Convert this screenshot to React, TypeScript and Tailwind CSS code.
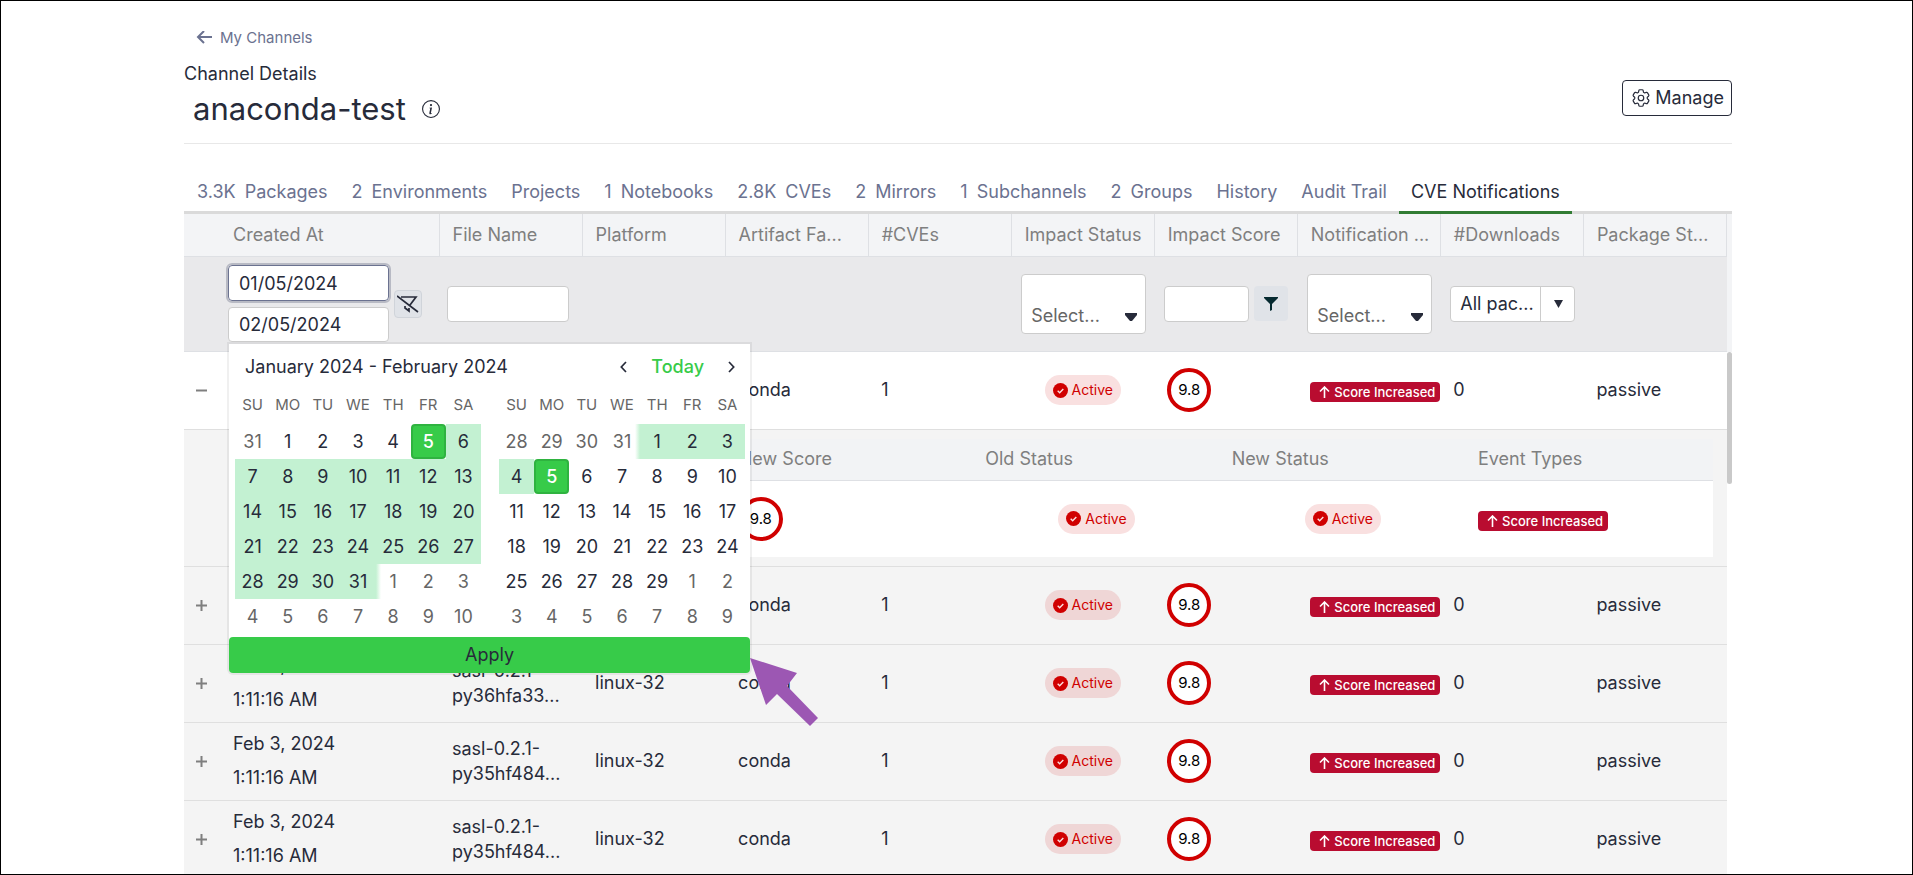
import React from "react";
import { BsInfoCircle } from "react-icons/bs";
import { HiOutlineCog6Tooth } from "react-icons/hi2";

interface Tab {
  count?: string;
  label: string;
}

interface Notification {
  id: number;
  date: string;
  time: string;
  fileName: string[];
  platform: string;
  family: string;
  cves: number;
  score: string;
  downloads: number;
  status: string;
}

interface MonthProps {
  name: string;
  days: number[];
  firstDay: number;
  lastDay: number;
  rangeStart: number;
  rangeEnd: number;
  selected: number;
}

const tabs: Tab[] = [
  { count: "3.3K", label: "Packages" },
  { count: "2", label: "Environments" },
  { label: "Projects" },
  { count: "1", label: "Notebooks" },
  { count: "2.8K", label: "CVEs" },
  { count: "2", label: "Mirrors" },
  { count: "1", label: "Subchannels" },
  { count: "2", label: "Groups" },
  { label: "History" },
  { label: "Audit Trail" },
  { label: "CVE Notifications" },
];

const columns = [
  "File Name",
  "Platform",
  "Artifact Fa...",
  "#CVEs",
  "Impact Status",
  "Impact Score",
  "Notification ...",
  "#Downloads",
  "Package St...",
];

const detailColumns = [
  "Event Date",
  "Old Score",
  "New Score",
  "Old Status",
  "New Status",
  "Event Types",
];

const weekDays = ["SU", "MO", "TU", "WE", "TH", "FR", "SA"];

const base = {
  date: "Feb 3, 2024",
  time: "1:11:16 AM",
  platform: "linux-32",
  family: "conda",
  cves: 1,
  score: "9.8",
  downloads: 0,
  status: "passive",
};

const notifications: Notification[] = [
  { id: 1, fileName: ["sasl-0.2.1-", "py36hfa33..."], ...base },
  { id: 2, fileName: ["sasl-0.2.1-", "py36hfa33..."], ...base },
  { id: 3, fileName: ["sasl-0.2.1-", "py36hfa33..."], ...base },
  { id: 4, fileName: ["sasl-0.2.1-", "py35hf484..."], ...base },
  { id: 5, fileName: ["sasl-0.2.1-", "py35hf484..."], ...base },
];

// Build the 42 numbers of a month page, with the neighbouring months' days
const monthPage = (prev: number[], length: number) => {
  const days = [...prev];
  for (let d = 1; d <= length; d++) days.push(d);
  for (let d = 1; days.length < 42; d++) days.push(d);
  return days;
};

function ActiveBadge() {
  return (
    <span className="inline-flex items-center gap-1 h-[30px] px-2 rounded-full bg-[#d00000]/12 text-[#d00000] text-sm align-middle">
      <svg width="15" height="15" viewBox="0 0 16 16" aria-hidden="true">
        <circle cx="8" cy="8" r="8" fill="#d00000" />
        <path
          d="M5 8.3 7.1 10.3 11 6.3"
          fill="none"
          stroke="#fbe0e0"
          strokeWidth="1.5"
        />
      </svg>
      Active
    </span>
  );
}

function ScoreCircle({ score }: { score: string }) {
  return (
    <span className="flex items-center justify-center w-11 h-11 rounded-full border-4 border-[#d00000] bg-white text-black text-[15px]">
      {score}
    </span>
  );
}

function ScoreIncreased() {
  return (
    <span className="relative top-0.5 inline-flex items-center gap-1 h-5 w-[130px] pl-[9px] rounded-sm bg-[#b90c30] text-white text-[13px] font-medium whitespace-nowrap">
      <svg
        className="shrink-0"
        width="11"
        height="12"
        viewBox="0 0 11 12"
        aria-hidden="true"
      >
        <path
          d="M5.5 12V1M1 5.5 5.5 1 10 5.5"
          fill="none"
          stroke="currentColor"
          strokeWidth="1.6"
        />
      </svg>
      Score Increased
    </span>
  );
}

function Caret({ small }: { small?: boolean }) {
  return (
    <svg
      width={small ? 9 : 12}
      height="8"
      viewBox="0 0 12 8"
      preserveAspectRatio="none"
      aria-hidden="true"
    >
      <path
        d={small ? "M0 0H12L6 8Z" : "M0 0H12V2L7 8H5L0 2Z"}
        fill="#272b3a"
      />
    </svg>
  );
}

function SelectFilter({ label }: { label: string }) {
  return (
    <div className="relative w-[125px] h-[60px] ml-0.5">
      <select
        aria-label={label}
        className="appearance-none w-full h-full pt-6 pl-[9px] bg-white border border-[#cccccc] rounded text-[#666666]"
      >
        <option>Select...</option>
      </select>
      <span className="absolute right-[9px] bottom-[13px] pointer-events-none">
        <Caret />
      </span>
    </div>
  );
}

function MonthCalendar(props: MonthProps) {
  const { name, days, firstDay, lastDay, rangeStart, rangeEnd, selected } =
    props;
  const weeks = [0, 1, 2, 3, 4, 5].map((w) => days.slice(w * 7, w * 7 + 7));

  return (
    <table
      aria-label={name}
      className="w-[246px] table-fixed text-center leading-6"
    >
      <thead>
        <tr className="h-[38px] text-[15px] text-[#666666]">
          {weekDays.map((day) => (
            <th key={day} className="font-normal p-0">
              {day}
            </th>
          ))}
        </tr>
      </thead>
      <tbody>
        {weeks.map((week, w) => (
          <tr key={w} className="h-[35px]">
            {week.map((day, d) => {
              const index = w * 7 + d;
              const inMonth = index >= firstDay && index <= lastDay;
              const inRange = index >= rangeStart && index <= rangeEnd;
              if (index === selected) {
                return (
                  <td key={d} className="p-0">
                    <button className="block w-full h-[35px] rounded bg-[#37cb49] border-2 border-[#2fb340] text-white font-medium">
                      {day}
                    </button>
                  </td>
                );
              }
              return (
                <td
                  key={d}
                  className={`relative p-0 ${inRange ? "bg-[#c3f1d2]" : ""} ${
                    inMonth ? "text-[#272b3a]" : "text-[#666666]"
                  }`}
                >
                  {day}
                  {/* soft edges where the range carries on in the other month */}
                  {inRange && index === lastDay && (
                    <span className="absolute left-full top-0 w-[5px] h-full bg-linear-to-r from-[#c3f1d2] to-white" />
                  )}
                  {inRange && index === firstDay && (
                    <span className="absolute right-full top-0 w-[5px] h-full bg-linear-to-l from-[#c3f1d2] to-white" />
                  )}
                </td>
              );
            })}
          </tr>
        ))}
      </tbody>
    </table>
  );
}

function DateRangePopup() {
  return (
    <div className="absolute z-10 left-px top-full mt-0.5 w-[521px] bg-white rounded-b shadow-[0_0_0_2px_rgba(0,0,0,0.06)] text-[#272b3a]">
      <div className="flex items-center h-[42px] pt-1 pl-4 pr-[7px]">
        <span className="grow">January 2024 - February 2024</span>
        <button aria-label="Previous month" className="px-2">
          <svg width="7" height="12" viewBox="0 0 7 12" aria-hidden="true">
            <path
              d="M6 1 1.3 6 6 11"
              fill="none"
              stroke="currentColor"
              strokeWidth="1.7"
            />
          </svg>
        </button>
        <button className="px-4 text-[#37cb49] font-medium">Today</button>
        <button aria-label="Next month" className="px-2">
          <svg width="7" height="12" viewBox="0 0 7 12" aria-hidden="true">
            <path
              d="M1 1 5.7 6 1 11"
              fill="none"
              stroke="currentColor"
              strokeWidth="1.7"
            />
          </svg>
        </button>
      </div>
      <div className="flex gap-[18px] pl-1.5">
        <MonthCalendar
          name="January 2024"
          days={monthPage([31], 31)}
          firstDay={1}
          lastDay={31}
          rangeStart={5}
          rangeEnd={31}
          selected={5}
        />
        <MonthCalendar
          name="February 2024"
          days={monthPage([28, 29, 30, 31], 29)}
          firstDay={4}
          lastDay={32}
          rangeStart={4}
          rangeEnd={8}
          selected={8}
        />
      </div>
      <button className="block w-full h-9 mt-[3px] rounded bg-[#37cb49]">
        Apply
      </button>
      <svg
        className="absolute left-full bottom-[-53px]"
        width="68"
        height="69"
        viewBox="0 0 68 69"
        aria-hidden="true"
      >
        <path
          d="M0 1 47 16 37 29 68 61 60 69 27 37 16 48Z"
          fill="#9c57b3"
        />
      </svg>
    </div>
  );
}

function DetailGrid() {
  return (
    <table className="w-full table-fixed">
      <thead>
        <tr className="h-[42px] bg-[#f2f3f5] border-b border-[#dee0e4] text-[#7f7f7f] text-left">
          {detailColumns.map((column) => (
            <th key={column} className="font-normal px-3">
              {column}
            </th>
          ))}
        </tr>
      </thead>
      <tbody>
        <tr className="h-[76px] bg-white">
          <td className="px-3">Feb 3, 2024</td>
          <td className="px-3">0</td>
          <td className="px-3">
            <ScoreCircle score="9.8" />
          </td>
          <td className="text-center">
            <ActiveBadge />
          </td>
          <td className="text-center">
            <ActiveBadge />
          </td>
          <td className="px-3">
            <ScoreIncreased />
          </td>
        </tr>
      </tbody>
    </table>
  );
}

function NotificationRow({ row, open }: { row: Notification; open: boolean }) {
  return (
    <tr
      className={`h-[78px] border-b border-[#dfdfdf] ${
        open ? "bg-white" : "bg-[#f4f4f4]"
      }`}
    >
      <td className="pl-3">
        <button
          aria-label={open ? "Collapse row" : "Expand row"}
          className="block text-[#7f7f7f]"
        >
          <svg width="11" height="11" viewBox="0 0 11 11" aria-hidden="true">
            <path
              d={open ? "M0 5.5H11" : "M0 5.5H11M5.5 0V11"}
              stroke="currentColor"
              strokeWidth="2"
            />
          </svg>
        </button>
      </td>
      <td className="px-[13px] leading-[34px]">
        {row.date}
        <br />
        {row.time}
      </td>
      <td className="px-[13px] leading-[25px] whitespace-nowrap">
        {row.fileName[0]}
        <br />
        {row.fileName[1]}
      </td>
      <td className="px-[13px]">{row.platform}</td>
      <td className="px-[13px]">{row.family}</td>
      <td className="px-[13px]">{row.cves}</td>
      <td className="text-center">
        <ActiveBadge />
      </td>
      <td className="px-[13px]">
        <ScoreCircle score={row.score} />
      </td>
      <td className="pl-[13px]">
        <ScoreIncreased />
      </td>
      <td className="px-[13px]">{row.downloads}</td>
      <td className="px-[13px]">{row.status}</td>
    </tr>
  );
}

export default function App() {
  const [from, setFrom] = React.useState("01/05/2024");
  const [to, setTo] = React.useState("02/05/2024");

  return (
    <div className="h-screen overflow-hidden border border-black bg-white pl-[183px] pr-[180px] font-['Inter',sans-serif] text-lg leading-6 text-[#272b3a]">
      <header className="flex items-start justify-between h-[143px] pt-[25px] border-b border-[#e8e8e8]">
        <div>
          <a
            href="#"
            className="flex items-center gap-2 pl-3 text-[15px] leading-6 text-[#6b7290]"
          >
            <svg width="16" height="14" viewBox="0 0 16 14" aria-hidden="true">
              <path
                d="M16 6H2M8 0 2 6 8 12"
                fill="none"
                stroke="currentColor"
                strokeWidth="2"
              />
            </svg>
            My Channels
          </a>
          <p className="mt-3">Channel Details</p>
          <div className="flex items-center gap-4 pl-[9px] mt-1">
            <h1 className="text-[31px] leading-[38px]">anaconda-test</h1>
            <BsInfoCircle size={18} />
          </div>
        </div>
        <button className="flex items-center gap-[3px] h-9 px-[7px] mt-[54px] border border-[#272b3a] rounded">
          <HiOutlineCog6Tooth size={22} strokeWidth={1.3} />
          Manage
        </button>
      </header>

      <nav className="flex h-[70px] pt-9 pl-px border-b-3 border-[#dadada] whitespace-nowrap">
        {tabs.map((tab) => (
          <a
            key={tab.label}
            href="#"
            className={`flex gap-[9px] px-3 -mb-[3px] ${
              tab.label === "CVE Notifications"
                ? "border-b-3 border-[#317c34]"
                : "text-[#6b7290]"
            }`}
          >
            {tab.count && <span>{tab.count}</span>}
            <span>{tab.label}</span>
          </a>
        ))}
      </nav>

      <div className="flex bg-[#f3f4f6]">
        <table className="grow w-0 table-fixed">
          <colgroup>
            <col className="w-9" />
            <col className="w-[219px]" />
            {columns.map((column) => (
              <col key={column} />
            ))}
          </colgroup>
          <thead>
            <tr className="h-[42px] border-b border-[#dee0e4] text-left text-[#7f7f7f]">
              <th />
              <th className="px-[13px] font-normal">Created At</th>
              {columns.map((column) => (
                <th
                  key={column}
                  className="pl-[13px] font-normal whitespace-nowrap border-l border-[#dee0e4] last:border-r"
                >
                  {column}
                </th>
              ))}
            </tr>
            <tr className="h-[95px] bg-[#e9e9eb] border-b border-[#dee0e4] text-left font-normal">
              <td />
              <td className="px-2">
                <div className="relative flex items-center gap-[5px]">
                  <div className="flex flex-col gap-1.5">
                    <input
                      aria-label="Start date"
                      value={from}
                      onChange={(e) => setFrom(e.target.value)}
                      className="w-[161px] h-9 px-2.5 bg-white border border-[#6b7290] rounded outline-2 outline-[#b8bac4]"
                    />
                    <input
                      aria-label="End date"
                      value={to}
                      onChange={(e) => setTo(e.target.value)}
                      className="w-[161px] h-[35px] px-2.5 bg-white border border-[#cccccc] rounded"
                    />
                  </div>
                  <button
                    aria-label="Clear filter"
                    className="flex items-center justify-center w-7 h-7 bg-[#e0e3e8] border border-[#d0d4da] rounded"
                  >
                    <svg
                      width="22"
                      height="18"
                      viewBox="0 0 22 18"
                      aria-hidden="true"
                    >
                      <path
                        d="M0 1 21 17M4 2H19L13 10M8 11V13L12 16V13"
                        fill="none"
                        stroke="#272b3a"
                        strokeWidth="1.7"
                      />
                    </svg>
                  </button>
                  <DateRangePopup />
                </div>
              </td>
              <td className="px-2">
                <input
                  aria-label="File name"
                  className="block w-[122px] h-9 px-2 bg-white border border-[#cccccc] rounded"
                />
              </td>
              <td />
              <td />
              <td />
              <td className="px-2">
                <SelectFilter label="Impact status" />
              </td>
              <td className="pl-2.5">
                <div className="flex items-center gap-[5px]">
                  <input
                    aria-label="Impact score"
                    className="w-[85px] h-9 px-2 bg-white border border-[#cccccc] rounded"
                  />
                  <button
                    aria-label="Filter impact score"
                    className="flex items-center justify-center w-[34px] h-[35px] bg-[#e0e3e8] rounded"
                  >
                    <svg
                      width="14"
                      height="14"
                      viewBox="0 0 14 14"
                      aria-hidden="true"
                    >
                      <path
                        d="M0 0H14V1L8 7V13L6 14V7L0 1Z"
                        fill="#062a30"
                      />
                    </svg>
                  </button>
                </div>
              </td>
              <td className="px-2">
                <SelectFilter label="Notification type" />
              </td>
              <td className="pl-2.5">
                <div className="relative w-[125px] h-9">
                  <select
                    aria-label="Downloads"
                    className="appearance-none w-full h-full pl-[9px] bg-white border border-[#cccccc] rounded"
                  >
                    <option>All pac...</option>
                  </select>
                  <span className="absolute right-0 top-0 flex items-center justify-center w-[35px] h-full border-l border-[#cccccc] pointer-events-none">
                    <Caret small />
                  </span>
                </div>
              </td>
              <td />
            </tr>
          </thead>
          <tbody>
            {notifications.map((row, i) => (
              <React.Fragment key={row.id}>
                <NotificationRow row={row} open={i === 0} />
                {i === 0 && (
                  <tr className="h-[137px] bg-[#f4f4f4] border-b border-[#dfdfdf]">
                    <td />
                    <td colSpan={10} className="pl-[14px] pr-[14px]">
                      <DetailGrid />
                    </td>
                  </tr>
                )}
              </React.Fragment>
            ))}
          </tbody>
        </table>
        {/* scrollbar of the grid */}
        <div className="w-[5px] pt-[138px]">
          <div className="h-full bg-white">
            <div className="h-[132px] rounded-full bg-[#c9c9c9]" />
          </div>
        </div>
      </div>
    </div>
  );
}
